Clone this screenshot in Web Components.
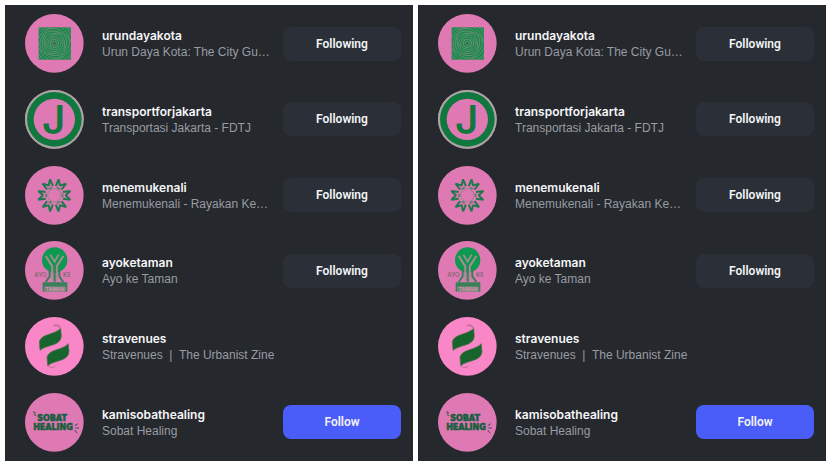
<!DOCTYPE html>
<html lang="en">
<head>
<meta charset="utf-8">
<title>Following</title>
<style>
    body {
        box-sizing: border-box;
        min-height: 100vh;
        margin: 0;
        padding: 5px 4px 5px 5px;
        background: #fff;
        display: grid;
        grid-template-columns: 1fr 1fr;
        gap: 5px;
        font-family: Inter, sans-serif;
    }
</style>
</head>
<body>
<account-list></account-list>
<account-list></account-list>

<script>
const range = (n) => Array.from({length: n}, (_, i) => i);

const artwork = {
    rings: `
        <rect x="41" y="40" width="97" height="97" fill="#168a4e"/>
        <svg x="41" y="40" width="97" height="97" viewBox="0 0 97 97">
            <g fill="none" stroke="#6f8d72" stroke-width="1">
                ${range(10).map(i => `<path transform="translate(47 48) rotate(${i * 23}) scale(${i + 1})" vector-effect="non-scaling-stroke"
                    d="M0-6C3-7 6-4 6 0C7 3 3 6 0 6C-4 7-6 3-6 0C-7-4-3-6 0-6Z"/>`).join('')}
            </g>
            <circle cx="47" cy="48" r="4" fill="#4b6254"/>
        </svg>`,
    letter: `
        <circle cx="88" cy="88" r="88" fill="#aaa5a2"/>
        <circle cx="88" cy="88" r="82" fill="#10783f"/>
        <circle cx="88" cy="88" r="62" fill="#de79b3"/>
        <text x="86" y="132" font-size="120" font-weight="600" text-anchor="middle" fill="#10783f">J</text>`,
    flower: `
        <g fill="none" stroke-linejoin="bevel">
            ${range(6).map(i => `<g transform="translate(88 88) rotate(${i * 60 + 90})">
                <path d="M-10-26L-13-48L0-34L13-48L10-26" stroke="#1c7a4c" stroke-width="6"/>
                <path d="M-5-27L0-22L5-27" stroke="#4f7d63" stroke-width="4"/>
                <path d="M-10-18L0-20L10-18" stroke="#a5848f" stroke-width="4"/>
            </g>`).join('')}
        </g>`,
    tree: `
        <circle cx="89" cy="57" r="38" fill="#0d9a50"/>
        <g fill="none" stroke="#a88e94" stroke-width="6">
            <path d="M62 45L82 76V120M115 45L95 76V120"/>
            <path d="M76 41L89 62L101 41" stroke-width="5"/>
        </g>
        <path d="M74 84V106L62 123M103 84V106L115 123M89 68V122" fill="none" stroke="#37805a" stroke-width="6"/>
        <path d="M53 124H127V152H122V137H58V152H53Z" fill="#37805a"/>
        <rect x="58" y="137" width="64" height="15" fill="#6c8a70"/>
        <g font-size="18" font-weight="500" fill="#70696b">
            <text x="28" y="107">AYO</text>
            <text x="114" y="107">KE</text>
            <text x="90" y="150" font-size="15" font-weight="700" text-anchor="middle" fill="#d991b5">TAMAN</text>
        </g>`,
    leaves: `
        <g fill="#17652d" stroke="#49734a" stroke-width="2">
            <path d="M45 100L43 74C50 50 88 54 107 34L109 58C106 88 68 82 45 100Z"/>
            <path transform="translate(23 46)" d="M45 100L43 74C50 50 88 54 107 34L109 58C106 88 68 82 45 100Z"/>
        </g>
        <path d="M107 34C105 25 94 20 86 26C94 24 101 27 107 34M68 146C75 152 85 155 91 146" fill="none" stroke="#9d6488" stroke-width="2"/>`,
    wordmark: `
        <g class="wide" font-weight="700" font-size="24" fill="#175f3e" stroke="#175f3e" stroke-width="2" text-anchor="middle">
            <text x="81" y="84">SOBAT</text>
            <text x="84" y="112">HEALING</text>
        </g>
        <path d="M24 58Q31 54 31 60L27 65L34 68M149 98L159 92M151 105H162M149 111L157 121" fill="none" stroke="#425549" stroke-width="3"/>`
};

class AccountAvatar extends HTMLElement {

    connectedCallback() {
        const root = this.attachShadow({mode: 'open'});
        root.innerHTML = `
            <style>
                :host { display: block; flex: none; width: 59px; height: 59px; }
                svg { display: block; }
                text { font-family: Inter, sans-serif; }
                .wide text { font-family: "DejaVu Sans", sans-serif; }
            </style>
            <svg width="100%" height="100%" viewBox="0 0 177 177" aria-hidden="true">
                <circle cx="88" cy="88" r="88" fill="${this.getAttribute('tint') || '#df79b4'}"/>
                ${artwork[this.getAttribute('art')]}
            </svg>
        `;
    }
}

class FollowButton extends HTMLElement {

    connectedCallback() {
        const root = this.attachShadow({mode: 'open'});
        root.innerHTML = `
            <style>
                :host { display: block; flex: none; width: 118px; }
                button {
                    display: block;
                    width: 100%;
                    height: 34px;
                    padding: 0;
                    border: 0;
                    border-radius: 8px;
                    background: #2b2f37;
                    color: #f2f4f6;
                    font-family: Roboto, sans-serif;
                    font-size: 12px;
                    font-weight: 600;
                    cursor: pointer;
                }
                :host([primary]) button { background: #4a5df9; }
            </style>
            <button type="button"><slot></slot></button>
        `;
    }
}

class AccountRow extends HTMLElement {

    connectedCallback() {
        const root = this.attachShadow({mode: 'open'});
        root.innerHTML = `
            <style>
                :host { display: flex; align-items: center; }
                .text {
                    flex: 1;
                    min-width: 0;
                    margin: 0 12px 0 18px;
                    padding-top: 1px;
                    font-size: 12px;
                    line-height: 16px;
                }
                .name { color: #f5f6f8; font-weight: 600; }
                .detail {
                    color: #989ca3;
                    font-family: "Liberation Sans", sans-serif;
                    overflow: hidden;
                    text-overflow: ellipsis;
                    white-space: pre;
                }
            </style>
            <slot name="avatar"></slot>
            <div class="text">
                <div class="name"><slot name="name"></slot></div>
                <div class="detail"><slot name="detail"></slot></div>
            </div>
            <slot name="action"></slot>
        `;
    }
}

class AccountList extends HTMLElement {

    connectedCallback() {
        const root = this.attachShadow({mode: 'open'});
        root.innerHTML = `
            <style>
                :host {
                    display: flex;
                    flex-direction: column;
                    justify-content: space-between;
                    min-width: 0;
                    padding: 9px 12px 9px 20px;
                    background: #25282d;
                }
            </style>
            <account-row>
                <account-avatar slot="avatar" art="rings"></account-avatar>
                <span slot="name">urundayakota</span>
                <span slot="detail">Urun Daya Kota: The City Gu…</span>
                <follow-button slot="action">Following</follow-button>
            </account-row>
            <account-row>
                <account-avatar slot="avatar" art="letter"></account-avatar>
                <span slot="name">transportforjakarta</span>
                <span slot="detail">Transportasi Jakarta - FDTJ</span>
                <follow-button slot="action">Following</follow-button>
            </account-row>
            <account-row>
                <account-avatar slot="avatar" art="flower"></account-avatar>
                <span slot="name">menemukenali</span>
                <span slot="detail">Menemukenali - Rayakan Ke…</span>
                <follow-button slot="action">Following</follow-button>
            </account-row>
            <account-row>
                <account-avatar slot="avatar" art="tree"></account-avatar>
                <span slot="name">ayoketaman</span>
                <span slot="detail">Ayo ke Taman</span>
                <follow-button slot="action">Following</follow-button>
            </account-row>
            <account-row>
                <account-avatar slot="avatar" art="leaves" tint="#f986c6"></account-avatar>
                <span slot="name">stravenues</span>
                <span slot="detail">Stravenues  |  The Urbanist Zine</span>
            </account-row>
            <account-row>
                <account-avatar slot="avatar" art="wordmark"></account-avatar>
                <span slot="name">kamisobathealing</span>
                <span slot="detail">Sobat Healing</span>
                <follow-button slot="action" primary>Follow</follow-button>
            </account-row>
        `;
    }
}

customElements.define('account-avatar', AccountAvatar);
customElements.define('follow-button', FollowButton);
customElements.define('account-row', AccountRow);
customElements.define('account-list', AccountList);
</script>
</body>
</html>
